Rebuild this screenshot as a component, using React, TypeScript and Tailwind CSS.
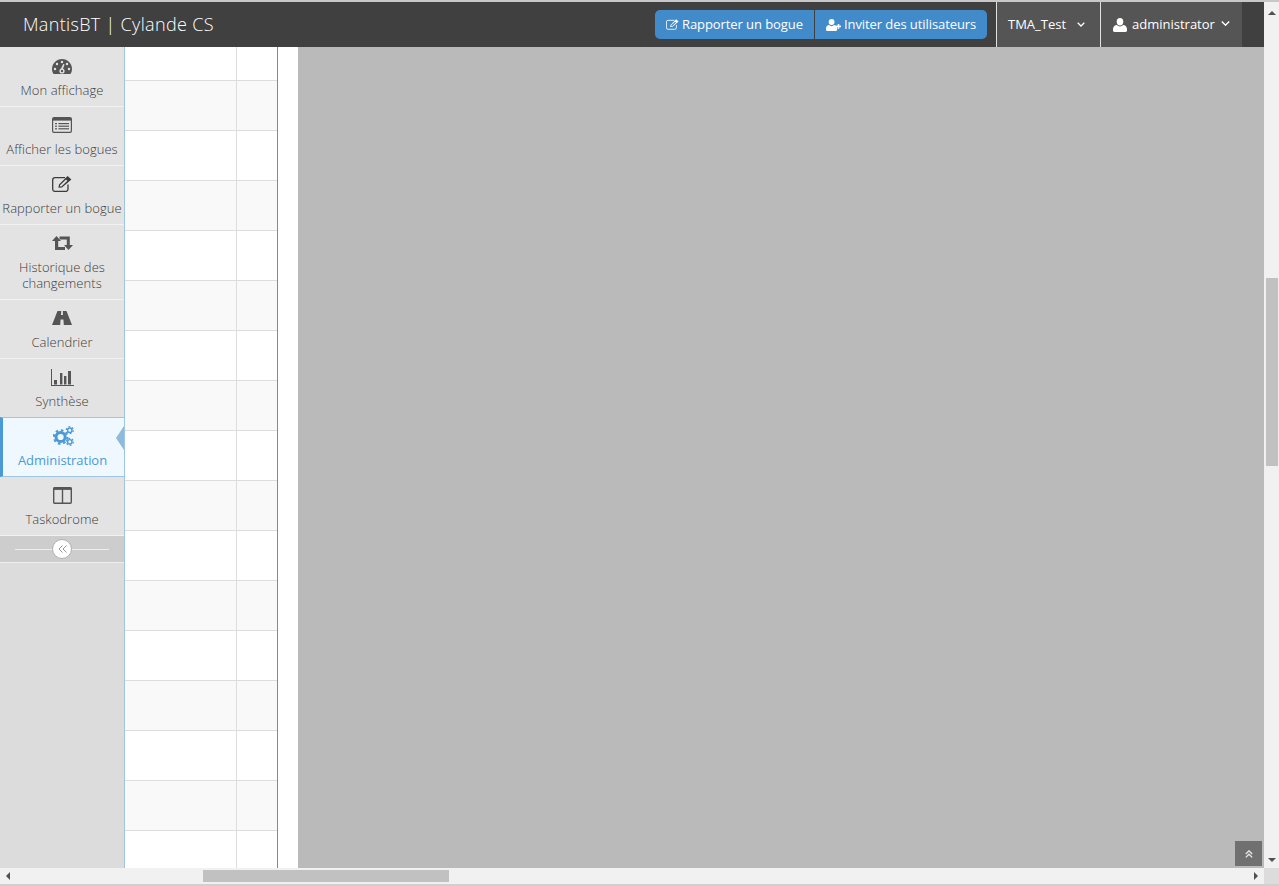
import React from "react";

const dark = "#555555";

// font-awesome 4 style icons, the icon package only has the newer shapes
function TachometerIcon() {
  return (
    <svg viewBox="0 0 20 15" className="w-[20px] h-[15px]">
      <path fill={dark} d="M10 0C4.5 0 0 4.5 0 10c0 1.9.6 3.6 1.6 5h16.8c1-1.4 1.6-3.1 1.6-5C20 4.5 15.5 0 10 0z" />
      <g fill="#e3e3e3">
        <circle cx="3" cy="10" r="1.2" />
        <circle cx="5" cy="5" r="1.2" />
        <circle cx="10" cy="3" r="1.2" />
        <circle cx="15" cy="5" r="1.2" />
        <circle cx="17" cy="10" r="1.2" />
        <path d="M8.6 10.5l2.6-5.6 1.4.6-2.2 5.8z" />
        <circle cx="10" cy="12" r="2.6" />
      </g>
      <circle cx="10" cy="12" r="1.2" fill={dark} />
    </svg>
  );
}

function ListAltIcon() {
  return (
    <svg viewBox="0 0 20 16" className="w-[20px] h-[16px]" fill={dark}>
      <rect x="0.6" y="0.6" width="18.8" height="14.8" rx="1.4" fill="none" stroke={dark} strokeWidth="1.2" />
      <rect x="1" y="1" width="18" height="2.6" />
      <rect x="3" y="6" width="2" height="1.2" />
      <rect x="3" y="8.6" width="2" height="1.2" />
      <rect x="3" y="11.2" width="2" height="1.2" />
      <rect x="6.4" y="6" width="10.6" height="1.2" />
      <rect x="6.4" y="8.6" width="10.6" height="1.2" />
      <rect x="6.4" y="11.2" width="10.6" height="1.2" />
    </svg>
  );
}

function EditIcon({ className }: { className: string }) {
  return (
    <svg viewBox="0 0 20 16" className={className}>
      <path d="M13 1.6H3A2.4 2.4 0 0 0 .7 4v9.2A2.4 2.4 0 0 0 3 15.4h10.6a2.4 2.4 0 0 0 2.4-2.4V8.6" fill="none" stroke="currentColor" strokeWidth="1.3" />
      <path d="M6.4 11.8l.6-3.2L15.6 0 19.4 3.4 10 11.6zM8 9.2l.2 1.2 1.2.2 6-5.8-1.4-1.2z" fill="currentColor" fillRule="evenodd" />
    </svg>
  );
}

function RetweetIcon() {
  return (
    <svg viewBox="0 0 21 14" className="w-[21px] h-[14px]" fill={dark}>
      <path d="M4.5 0L9 5H6.2v6H13l0 3H3V5H0z" />
      <path d="M7.5 0.4H17.8V9H21l-4.5 5L12 9h2.8V3.4H7.5z" />
    </svg>
  );
}

function RoadIcon() {
  return (
    <svg viewBox="0 0 20 14" className="w-[20px] h-[14px]">
      <path fill={dark} fillRule="evenodd" d="M5.5 0H14.5L20 14H0zM9.2 0L9 4H11L10.8 0zM8.6 8.4L8.2 14H11.8L11.4 8.4z" />
    </svg>
  );
}

function BarChartIcon() {
  return (
    <svg viewBox="0 0 23 17" className="w-[23px] h-[17px]" fill={dark}>
      <rect x="0" y="0" width="1" height="17" />
      <rect x="0" y="16" width="23" height="1" />
      <rect x="3" y="11" width="3" height="4.5" />
      <rect x="9" y="4" width="2.4" height="11.5" />
      <rect x="13" y="7" width="2.4" height="8.5" />
      <rect x="17" y="2" width="3" height="13.5" />
    </svg>
  );
}

function CogsIcon() {
  return (
    <svg viewBox="0 0 21 20" className="w-[21px] h-[20px]" fill="none" stroke="#4b99d6">
      <circle cx="7.6" cy="11" r="4.6" strokeWidth="3" />
      <circle cx="7.6" cy="11" r="6.8" strokeWidth="2" strokeDasharray="2.67 2.67" />
      <circle cx="16.8" cy="4.2" r="2.2" strokeWidth="1.4" />
      <circle cx="16.8" cy="4.2" r="3.5" strokeWidth="1.2" strokeDasharray="1.83 1.83" />
      <circle cx="16.8" cy="15.8" r="2.2" strokeWidth="1.4" />
      <circle cx="16.8" cy="15.8" r="3.5" strokeWidth="1.2" strokeDasharray="1.83 1.83" />
    </svg>
  );
}

function ColumnsIcon() {
  return (
    <svg viewBox="0 0 19 17" className="w-[19px] h-[17px]" fill={dark}>
      <rect x="0.7" y="0.7" width="17.6" height="15.6" rx="1" fill="none" stroke={dark} strokeWidth="1.4" />
      <rect x="0.5" y="0.5" width="18" height="2.4" />
      <rect x="8.8" y="1" width="1.4" height="15" />
    </svg>
  );
}

function UserIcon() {
  return (
    <svg viewBox="0 0 14 14" className="w-[14px] h-[14px]" fill="currentColor">
      <ellipse cx="7" cy="3.7" rx="3.3" ry="3.7" />
      <path d="M0 12.6V11c0-2.4 1.8-3.8 3.8-4 .9.9 2 1.4 3.2 1.4s2.3-.5 3.2-1.4c2 .2 3.8 1.6 3.8 4v1.6c0 .9-.6 1.4-1.4 1.4H1.4C.6 14 0 13.5 0 12.6z" />
    </svg>
  );
}

function UserPlusIcon() {
  return (
    <svg viewBox="0 0 15 12" className="w-[15px] h-[12px]" fill="currentColor">
      <ellipse cx="5.6" cy="3" rx="2.9" ry="3" />
      <path d="M0 10.8V9.4c0-2 1.5-3.1 3-3.3.7.7 1.6 1.1 2.6 1.1s1.9-.4 2.6-1.1c1.5.2 3 1.3 3 3.3v1.4c0 .7-.5 1.2-1.2 1.2H1.2C.5 12 0 11.5 0 10.8z" />
      <rect x="10" y="6.6" width="5" height="1.6" />
      <rect x="11.7" y="5" width="1.6" height="4.8" />
    </svg>
  );
}

function AngleDown({ className }: { className: string }) {
  return (
    <svg viewBox="0 0 9 5" className={className} fill="none" stroke="currentColor" strokeWidth="1.4">
      <polyline points="0.8,0.6 4.5,4.2 8.2,0.6" />
    </svg>
  );
}

const menu = [
  { label: ["Mon affichage"], icon: <TachometerIcon />, h: "h-[60px] pt-[7px]" },
  { label: ["Afficher les bogues"], icon: <ListAltIcon />, h: "h-[59px] pt-[6px]" },
  { label: ["Rapporter un bogue"], icon: <EditIcon className="w-[20px] h-[16px]" />, h: "h-[59px] pt-[6px]" },
  { label: ["Historique des", "changements"], icon: <RetweetIcon />, h: "h-[75px] pt-[6px]" },
  { label: ["Calendrier"], icon: <RoadIcon />, h: "h-[59px] pt-[6px]" },
  { label: ["Synthèse"], icon: <BarChartIcon />, h: "h-[59px] pt-[6px]" },
];

function MenuItem({ label, icon, h }: { label: string[]; icon: React.ReactNode; h: string }) {
  return (
    <div className={"flex flex-col items-center border-b border-[#f2f2f2] bg-[#e3e3e3] text-[#3c3c3c] " + h}>
      <div className="h-[24px] flex items-center justify-center">{icon}</div>
      <div className="mt-[4px] text-center text-[13px] leading-[16px] whitespace-nowrap font-light tracking-[0.05px]">
        {label.map((l) => (
          <div key={l}>{l}</div>
        ))}
      </div>
    </div>
  );
}

function Sidebar() {
  return (
    <div className="w-[125px] shrink-0 h-full bg-[#dcdcdc] border-r border-[#9fc6e0]">
      {menu.map((m) => (
        <MenuItem key={m.label[0]} {...m} />
      ))}

      {/* active item */}
      <div className="relative h-[60px] flex flex-col items-center bg-[#f0f8ff] text-[#4b99d6] border-t border-b border-[#9fc6e0] border-l-[3px] border-l-[#4b99d6] -mt-px pt-[6px]">
        <div className="h-[24px] flex items-center justify-center">
          <CogsIcon />
        </div>
        <div className="mt-[4px] -ml-[2px] text-[13px] leading-[16px] tracking-[-0.05px]">Administration</div>
        <div className="absolute right-0 top-[8px] w-0 h-0 border-y-[12px] border-y-transparent border-r-[8px] border-r-[#8ebbdc]" />
      </div>

      <MenuItem label={["Taskodrome"]} icon={<ColumnsIcon />} h="h-[59px] pt-[6px]" />

      {/* collapse button */}
      <div className="relative h-[27px] bg-[#cdcdcd] border-b border-[#eeeeee] flex items-center justify-center">
        <div className="absolute left-[15px] right-[15px] top-[13px] h-px bg-[#eeeeee]" />
        <div className="relative w-[20px] h-[20px] rounded-full bg-white border border-[#b0b0b0] flex items-center justify-center">
          <svg viewBox="0 0 9 8" className="w-[9px] h-[8px]" fill="none" stroke="#999999" strokeWidth="1">
            <polyline points="4.5,0.5 1,4 4.5,7.5" />
            <polyline points="8.5,0.5 5,4 8.5,7.5" />
          </svg>
        </div>
      </div>
    </div>
  );
}

function TableColumn() {
  const rows = Array.from({ length: 17 }, (_, i) => i);
  return (
    <div className="w-[153px] shrink-0 h-full overflow-hidden bg-white border-r border-[#5f93bd]">
      <div className="flex h-[34px] border-b border-[#dddddd]">
        <div className="w-[112px] border-r border-[#dddddd]" />
        <div className="flex-1" />
      </div>
      {rows.map((i) => (
        <div key={i} className={"flex h-[50px] border-b border-[#dddddd] " + (i % 2 === 0 ? "bg-[#f9f9f9]" : "bg-white")}>
          <div className="w-[112px] border-r border-[#dddddd]" />
          <div className="flex-1" />
        </div>
      ))}
    </div>
  );
}

function Navbar() {
  return (
    <div className="h-[45px] shrink-0 bg-[#404040] flex items-stretch text-white">
      <div className="pl-[23px] text-[18px] leading-[45px] whitespace-nowrap font-light tracking-[0.33px]">MantisBT | Cylande CS</div>
      <div className="flex-1" />
      <div className="flex items-center mr-[9px]">
        <div className="flex h-[29px] rounded-[5px] overflow-hidden bg-[#428bca] text-[13px] tracking-[-0.08px]">
          <div className="w-[160px] flex items-center pl-[11px] gap-[3px] border-r border-[#404040]">
            <EditIcon className="w-[13px] h-[11px]" />
            <span>Rapporter un bogue</span>
          </div>
          <div className="w-[172px] flex items-center pl-[11px] gap-[3px]">
            <UserPlusIcon />
            <span>Inviter des utilisateurs</span>
          </div>
        </div>
      </div>
      <div className="w-[104px] bg-[#555555] border-l border-[#e0e0e0] flex items-center pl-[11px] text-[13px]">
        <span>TMA_Test</span>
        <AngleDown className="w-[8px] h-[5px] ml-[11px]" />
      </div>
      <div className="w-[142px] bg-[#555555] border-l border-[#e0e0e0] flex items-center pl-[12px] text-[13px]">
        <UserIcon />
        <span className="ml-[5px]">administrator</span>
        <AngleDown className="w-[9px] h-[5px] ml-[6px] -mt-[2px]" />
      </div>
      <div className="w-[22px]" />
    </div>
  );
}

function VerticalScrollbar() {
  return (
    <div className="w-[15px] shrink-0 h-full bg-[#f1f1f1] flex flex-col items-center pt-[9px] pb-[6px] border-t-2 border-[#c8c8c8]">
      <div className="w-0 h-0 border-x-[4px] border-x-transparent border-b-[4px] border-b-[#505050]" />
      <div className="w-[12px] h-[188px] bg-[#c1c1c1] mt-[263px]" />
      <div className="flex-1" />
      <div className="w-0 h-0 border-x-[4px] border-x-transparent border-t-[4px] border-t-[#505050]" />
    </div>
  );
}

function HorizontalScrollbar() {
  return (
    <div className="h-[18px] shrink-0 flex">
      <div className="flex-1 bg-[#f1f1f1] border-b-2 border-[#d0d0d0] relative flex items-center pl-[6px] pr-[6px]">
        <div className="w-0 h-0 border-y-[4px] border-y-transparent border-r-[4px] border-r-[#505050]" />
        <div className="w-[246px] h-[12px] bg-[#c1c1c1] ml-[193px]" />
        <div className="flex-1" />
        <div className="w-0 h-0 border-y-[4px] border-y-transparent border-l-[4px] border-l-[#505050]" />
      </div>
      <div className="w-[15px] bg-[#dcdcdc] border-b-2 border-[#d0d0d0]" />
    </div>
  );
}

export default function App() {
  return (
    <div className="w-[1279px] h-[886px] overflow-hidden flex flex-col bg-white font-['Open_Sans',sans-serif]">
      <div className="flex-1 min-h-0 flex">
        <div className="flex-1 min-w-0 flex flex-col">
          <div className="h-[2px] shrink-0 bg-[#c8c8c8]" />
          <Navbar />
          <div className="relative flex-1 min-h-0 flex">
            <Sidebar />
            <TableColumn />
            <div className="w-[20px] shrink-0 bg-white" />
            <div className="flex-1 bg-[#bababa]" />
            <div className="absolute right-[2px] bottom-[2px] w-[27px] h-[25px] bg-[#707070] flex items-center justify-center">
              <svg viewBox="0 0 8 8" className="w-[8px] h-[8px]" fill="none" stroke="#e8e8e8" strokeWidth="1.3">
                <polyline points="0.8,4 4,0.8 7.2,4" />
                <polyline points="0.8,7.4 4,4.2 7.2,7.4" />
              </svg>
            </div>
          </div>
        </div>
        <VerticalScrollbar />
      </div>
      <HorizontalScrollbar />
    </div>
  );
}
